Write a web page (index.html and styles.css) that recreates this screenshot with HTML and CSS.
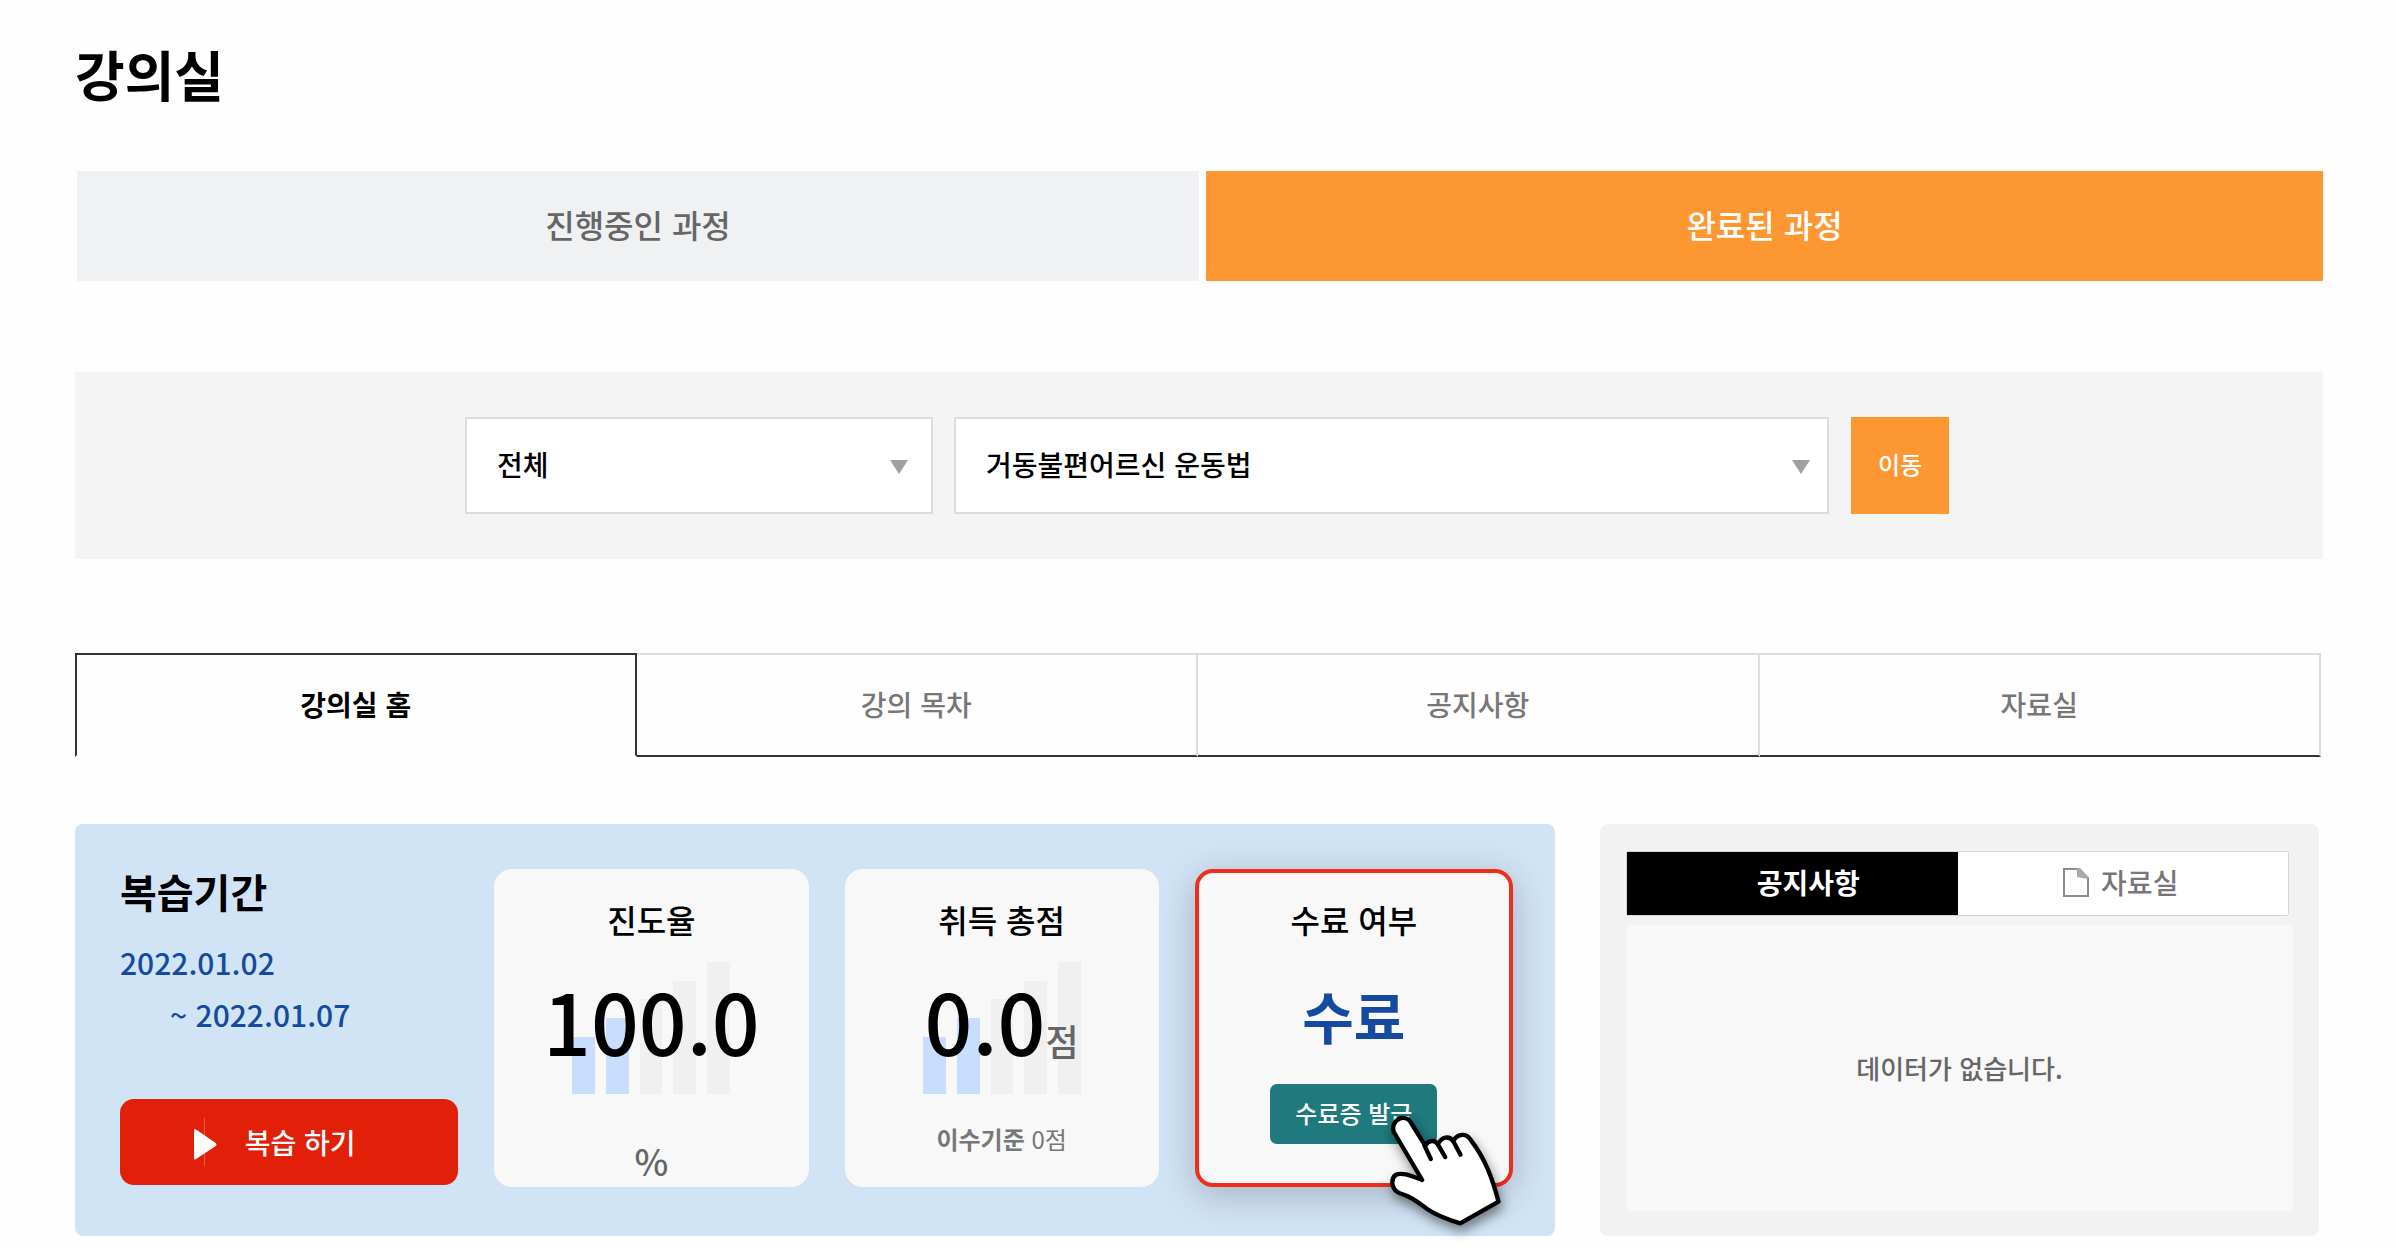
FILE: index.html
```html
<!DOCTYPE html>
<html lang="ko">
<head>
<meta charset="utf-8">
<meta name="viewport" content="width=device-width, initial-scale=1">
<title>강의실</title>
<link rel="stylesheet" href="styles.css">
</head>
<body>
<main class="page">
  <h1 class="page-title">강의실</h1>

  <nav class="course-tabs">
    <a class="course-tab" href="#ongoing">진행중인 과정</a>
    <a class="course-tab course-tab-active" href="#completed">완료된 과정</a>
  </nav>

  <form class="filter">
    <div class="select select-category">
      <select aria-label="분류"><option>전체</option></select>
    </div>
    <div class="select select-course">
      <select aria-label="과정"><option>거동불편어르신 운동법</option></select>
    </div>
    <button class="filter-button" type="button">이동</button>
  </form>

  <nav class="room-tabs">
    <a class="room-tab room-tab-active" href="#home">강의실 홈</a>
    <a class="room-tab" href="#contents">강의 목차</a>
    <a class="room-tab" href="#notices">공지사항</a>
    <a class="room-tab" href="#files">자료실</a>
  </nav>

  <div class="panels">
    <section class="summary">
      <div class="period">
        <h2 class="period-title">복습기간</h2>
        <p class="period-dates">2022.01.02<span class="period-end">~ 2022.01.07</span></p>
        <button class="review-button" type="button">
          <svg class="play" viewBox="0 0 24 48" aria-hidden="true">
            <path d="M11.500 0V48" stroke="#fff" stroke-opacity=".25"/>
            <path d="M1 12.500Q1 10 3 11.500L22 24.500Q25 26.500 22 28.500L3 41Q1 42.500 1 40Z" fill="#fff"/>
          </svg>
          복습 하기
        </button>
      </div>

      <article class="card">
        <h3 class="card-label">진도율</h3>
        <div class="score">
          <svg class="bars" viewBox="0 0 158 132" aria-hidden="true">
            <path d="M0 75h23v57H0zM34 56h23v76H34z" fill="#c9deff"/>
            <path d="M68 37h22v95H68zM101 19h23v113h-23zM135 0h23v132h-23z" fill="#f0f0f0"/>
          </svg>
          <strong class="score-value">100.0</strong>
        </div>
        <span class="card-unit">%</span>
      </article>

      <article class="card">
        <h3 class="card-label">취득 총점</h3>
        <div class="score">
          <svg class="bars" viewBox="0 0 158 132" aria-hidden="true">
            <path d="M0 75h23v57H0zM34 56h23v76H34z" fill="#c9deff"/>
            <path d="M68 37h22v95H68zM101 19h23v113h-23zM135 0h23v132h-23z" fill="#f0f0f0"/>
          </svg>
          <strong class="score-value">0.0</strong><span class="score-unit">점</span>
        </div>
        <p class="card-note"><b class="card-note-label">이수기준</b> 0점</p>
      </article>

      <article class="card card-highlight">
        <h3 class="card-label">수료 여부</h3>
        <strong class="status">수료</strong>
        <button class="certificate-button" type="button">수료증 발급</button>
        <svg class="hand" viewBox="620 780 350 360" aria-hidden="true">
          <path d="M725 987L640 843C628 808 674 784 692 816L734 884C745 866 762 866 772 880C785 856 806 854 818 870C832 846 858 846 870 866C915 925 935 980 954 1052L839 1117C800 1105 760 1088 740 1074C710 1052 690 1036 656 1026C632 1014 630 985 645 972C665 962 695 976 725 987Z" fill="#fff" stroke="#000" stroke-width="13" stroke-linejoin="round"/>
          <path d="M732 884L751 924M772 880L794 918M818 870L840 911" fill="none" stroke="#000" stroke-width="13" stroke-linecap="round"/>
        </svg>
      </article>
    </section>

    <section class="board">
      <div class="board-tabs">
        <button class="board-tab board-tab-active" type="button">공지사항</button>
        <button class="board-tab" type="button">
          <svg class="file-icon" viewBox="0 0 26 30" aria-hidden="true">
            <path d="M1 2H16L25 11V29H1Z" fill="#fff" stroke="#8c8c8c" stroke-width="2"/>
            <path d="M14 1H17L25 10V12L14 10Z" fill="#a8a8a8"/>
          </svg>
          자료실
        </button>
      </div>
      <p class="board-empty">데이터가 없습니다.</p>
    </section>
  </div>
</main>
</body>
</html>
```
FILE: styles.css
```css
* { box-sizing: border-box; margin: 0; padding: 0; }

body {
  background: #fefefe;
  color: #000;
  font-family: "Noto Sans CJK KR", sans-serif;
  font-size: 28px;
  font-weight: 500;
}

a { color: inherit; text-decoration: none; }
button, select { font: inherit; border: 0; cursor: pointer; }
h3, strong { font-weight: 500; }

.page { padding: 34px 73px 12px 75px; }

.page-title { font-size: 54px; line-height: 80px; }

.course-tabs {
  display: grid;
  grid-template-columns: 1122fr 1117fr;
  gap: 7px;
  padding-left: 2px;
  margin-top: 57px;
}
.course-tab {
  padding-bottom: 4px;
  background: #f0f1f3;
  color: #666;
  font-size: 32px;
  line-height: 106px;
  text-align: center;
}
.course-tab-active { background: #fd9732; color: #fff; }

.filter {
  display: flex;
  justify-content: center;
  padding: 45px 0 45px 16px;
  margin-top: 91px;
  background: #f4f4f4;
}
.select { position: relative; height: 97px; }
.select-category { width: 468px; margin-right: 21px; }
.select-course { width: 875px; margin-right: 22px; }
.select select {
  appearance: none;
  width: 100%;
  height: 100%;
  padding: 0 60px 4px 30px;
  border: 2px solid #dcdcdc;
  background: #fff;
  color: #000;
}
.select::after {
  content: "";
  position: absolute;
  top: 43px;
  right: 25px;
  border: 9px solid transparent;
  border-top: 14px solid #a0a0a0;
  border-bottom: 0;
  pointer-events: none;
}
.select-course::after { right: 19px; }
.filter-button {
  width: 98px;
  padding-bottom: 4px;
  background: #fd9732;
  color: #fff;
  font-size: 24px;
}

.room-tabs {
  display: grid;
  grid-template-columns: repeat(4, 1fr);
  padding-right: 2px;
  margin-top: 94px;
}
.room-tab {
  padding-bottom: 2px;
  border: 2px solid #ddd;
  border-left: 0;
  border-bottom-color: #333;
  color: #777;
  line-height: 98px;
  text-align: center;
}
.room-tab-active {
  border: 2px solid #333;
  border-bottom-color: transparent;
  color: #000;
  font-weight: 700;
}

.panels {
  display: grid;
  grid-template-columns: 1480fr 719fr;
  gap: 45px;
  padding-right: 4px;
  margin-top: 67px;
}

.summary {
  display: grid;
  grid-template-columns: 338fr 314fr 314fr 318fr;
  gap: 36px;
  padding: 45px 42px 49px 45px;
  border-radius: 8px;
  background: #d1e4f5;
}
.period { display: flex; flex-direction: column; }
.period-title { font-size: 40px; line-height: 44px; }
.period-dates {
  margin-top: 23px;
  color: #144a9f;
  font-size: 30px;
  line-height: 52px;
}
.period-end { display: block; padding-left: 50px; }
.review-button {
  display: flex;
  align-items: center;
  justify-content: center;
  gap: 28px;
  height: 86px;
  margin-top: auto;
  margin-bottom: 2px;
  padding-right: 30px;
  border-radius: 14px;
  background: #e2200a;
  color: #fff;
}
.play { width: 24px; height: 48px; }

.card {
  display: flex;
  flex-direction: column;
  align-items: center;
  height: 318px;
  padding-top: 30px;
  border-radius: 18px;
  background: #f8f8f8;
}
.card-label { font-size: 32px; line-height: 40px; }
.score {
  position: relative;
  display: flex;
  align-items: baseline;
  justify-content: center;
  height: 132px;
  margin-top: 23px;
  line-height: 116px;
}
.bars {
  position: absolute;
  top: 0;
  left: 50%;
  width: 158px;
  height: 132px;
  margin-left: -79px;
}
.score-value { position: relative; font-size: 84px; }
.score-unit { position: relative; color: #666; font-size: 36px; }
.card-unit { margin-top: 44px; color: #666; font-size: 36px; line-height: 44px; }
.card-note { margin-top: 25px; color: #777; font-size: 24px; line-height: 40px; }
.card-note { font-weight: 400; }
.card-note-label { font-weight: 700; }

.card-highlight {
  position: relative;
  padding-top: 26px;
  border: 4px solid #f02c1a;
  box-shadow: 0 8px 36px rgba(0, 0, 0, .22);
}
.status {
  margin-top: 36px;
  color: #144a9f;
  font-size: 56px;
  font-weight: 700;
  line-height: 80px;
}
.certificate-button {
  width: 167px;
  height: 60px;
  margin-top: 29px;
  padding-bottom: 4px;
  border-radius: 7px;
  background: #1f797d;
  color: #fff;
  font-size: 24px;
}
.hand {
  position: absolute;
  right: 5px;
  bottom: -48px;
  width: 117px;
  height: 120px;
  overflow: visible;
  filter: drop-shadow(2px 6px 6px rgba(0, 0, 0, .45));
}

.board {
  display: flex;
  flex-direction: column;
  padding: 27px 26px 25px;
  border-radius: 8px;
  background: #f2f2f2;
}
.board-tabs {
  display: grid;
  grid-template-columns: 1fr 1fr;
  height: 65px;
  margin-right: 4px;
  border: 1px solid #d4d4d4;
  border-radius: 3px;
}
.board-tab {
  display: flex;
  align-items: center;
  justify-content: center;
  gap: 12px;
  padding-right: 4px;
  padding-bottom: 4px;
  background: #fff;
  color: #777;
}
.board-tab-active {
  padding-left: 36px;
  background: #000;
  color: #fff;
  font-weight: 700;
}
.file-icon { width: 26px; height: 30px; }
.board-empty {
  flex: 1;
  display: flex;
  align-items: center;
  justify-content: center;
  margin-top: 9px;
  padding-bottom: 2px;
  background: #f8f8f8;
  color: #666;
  font-size: 26px;
}
```
